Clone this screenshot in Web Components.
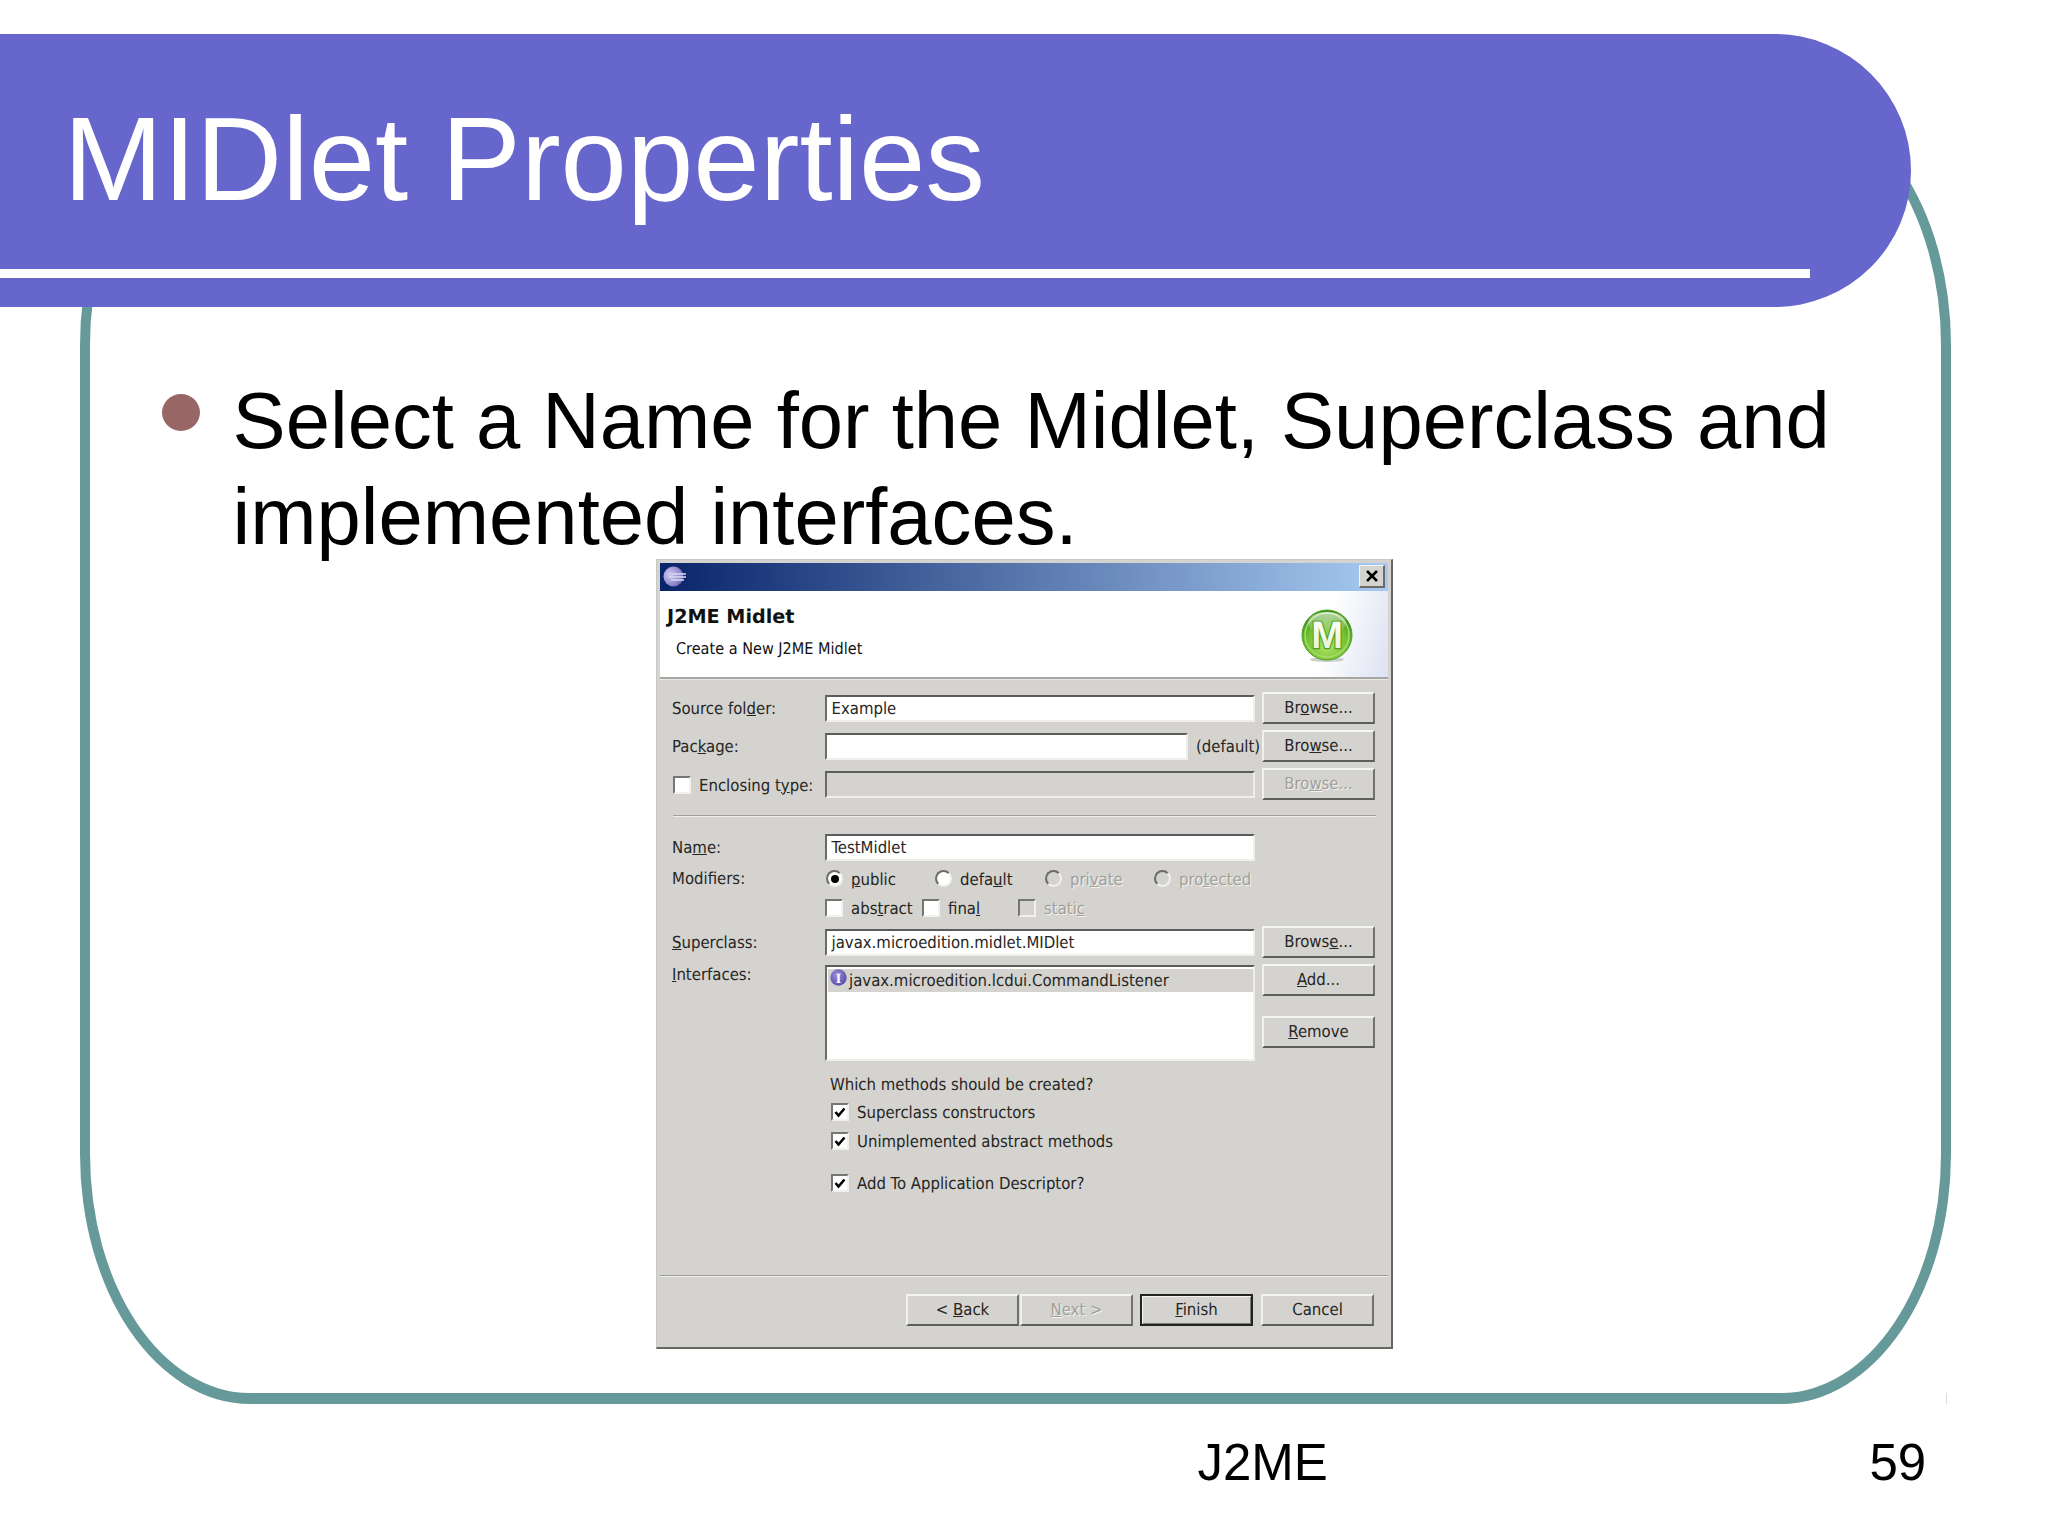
<!DOCTYPE html>
<html lang="en">
<head>
<meta charset="utf-8">
<title>MIDlet Properties</title>
<style>
html, body { margin: 0; background: #fff; }
</style>
</head>
<body>
<slide-page>
  <slide-title slot="title">MIDlet Properties</slide-title>
  <slide-bullet slot="bullet">Select a Name for the Midlet, Superclass and implemented interfaces.</slide-bullet>
  <swt-dialog slot="dialog">
    <span slot="heading">J2ME Midlet</span>
    <span slot="sub">Create a New J2ME Midlet</span>

    <form-row style="height:32px">
      <span slot="label">Source fol<u>d</u>er:</span>
      <swt-field>Example</swt-field>
      <swt-button slot="action">Br<u>o</u>wse...</swt-button>
    </form-row>
    <form-row style="height:32px;margin-top:6px">
      <span slot="label">Pac<u>k</u>age:</span>
      <swt-field style="width:363px"></swt-field>
      <span class="suffix" style="margin-left:8px;white-space:nowrap;position:relative;top:1px">(default)</span>
      <swt-button slot="action">Bro<u>w</u>se...</swt-button>
    </form-row>
    <form-row style="height:32px;margin-top:6px">
      <swt-check slot="label" style="margin-left:1px">Enclosing t<u>y</u>pe:</swt-check>
      <swt-field disabled></swt-field>
      <swt-button slot="action" disabled>Bro<u>w</u>se...</swt-button>
    </form-row>
    <form-sep></form-sep>
    <form-row style="height:26px;margin-top:17px">
      <span slot="label">Na<u>m</u>e:</span>
      <swt-field>TestMidlet</swt-field>
    </form-row>
    <form-row style="height:17px;margin-top:10px">
      <span slot="label">Modifiers:</span>
      <choice-grid cols="109px 110px 109px 1fr">
        <swt-radio checked style="margin-left:1px"><u>p</u>ublic</swt-radio>
        <swt-radio style="margin-left:1px">defa<u>u</u>lt</swt-radio>
        <swt-radio disabled style="margin-left:1px">pri<u>v</u>ate</swt-radio>
        <swt-radio disabled style="margin-left:1px">pro<u>t</u>ected</swt-radio>
      </choice-grid>
    </form-row>
    <form-row style="height:19px;margin-top:11px">
      <choice-grid cols="97px 96px 1fr">
        <swt-check>abs<u>t</u>ract</swt-check>
        <swt-check>fina<u>l</u></swt-check>
        <swt-check disabled>stati<u>c</u></swt-check>
      </choice-grid>
    </form-row>
    <form-row style="height:32px;margin-top:9px">
      <span slot="label"><u>S</u>uperclass:</span>
      <swt-field>javax.microedition.midlet.MIDlet</swt-field>
      <swt-button slot="action">Brows<u>e</u>...</swt-button>
    </form-row>
    <form-row style="height:97px;margin-top:6px;align-items:start">
      <span slot="label"><u>I</u>nterfaces:</span>
      <swt-list>javax.microedition.lcdui.CommandListener</swt-list>
      <swt-button slot="action" style="height:32px"><u>A</u>dd...</swt-button>
      <swt-button slot="action" style="height:32px;margin-top:20px"><u>R</u>emove</swt-button>
    </form-row>

    <method-list>
      <span slot="question">Which methods should be created?</span>
      <swt-check checked style="height:18px;margin-top:8px">Superclass constructors</swt-check>
      <swt-check checked style="height:18px;margin-top:11px">Unimplemented abstract methods</swt-check>
      <swt-check checked style="height:18px;margin-top:24px">Add To Application Descriptor?</swt-check>
    </method-list>

    <swt-button slot="footer" style="width:113px;margin-right:1px">&lt; <u>B</u>ack</swt-button>
    <swt-button slot="footer" style="width:113px;margin-right:7px" disabled><u>N</u>ext &gt;</swt-button>
    <swt-button slot="footer" style="width:113px;margin-right:8px" default><u>F</u>inish</swt-button>
    <swt-button slot="footer" style="width:113px">Cancel</swt-button>
  </swt-dialog>
  <span slot="center">J2ME</span>
  <span slot="number">59</span>
</slide-page>

<script>
const UI_FONT = `"DejaVu Sans Condensed", "Noto Sans", sans-serif`;

function define(name, css, html, extra = {}) {
  const template = document.createElement("template");
  template.innerHTML = `<style>${css}</style>${html}`;
  class Part extends HTMLElement {
    constructor() {
      super();
      this.attachShadow({ mode: "open" });
      this.shadowRoot.appendChild(template.content.cloneNode(true));
      if (extra.init) extra.init(this);
    }
  }
  customElements.define(name, Part);
}

define("slide-page", `
  :host {
    display: grid;
    position: relative;
    width: 2048px;
    height: 1536px;
    overflow: hidden;
    background: #fff;
    font-family: "Liberation Sans", Arial, sans-serif;
    color: #000;
    grid-template-rows: 1404px auto;
  }
  .title { grid-area: 1 / 1; z-index: 1; align-self: start; margin-top: 34px; width: 1911px; }
  .frame {
    grid-area: 1 / 1;
    box-sizing: border-box;
    margin: 95px 97px 0 80px;
    border: 10px solid #669999;
    border-bottom-width: 11px;
    border-radius: 170px / 250px;
    padding-top: 268.3px;
    display: flex;
    flex-direction: column;
    align-items: flex-start;
  }
  .dialog { display: block; margin: -5.1px 0 0 566px; }
  .foot {
    display: grid;
    grid-template-columns: 1197.5px 672px auto;
    padding-top: 29.3px;
    font-size: 51px;
    line-height: 60px;
  }
  .foot .c { grid-column: 2; }
  .foot .n { grid-column: 3; }
  .speck { position: absolute; left: 1946px; top: 1393px; width: 1px; height: 11px; background: #dcdcdc; }
`, `
  <div class="title"><slot name="title"></slot></div>
  <div class="frame">
    <slot name="bullet"></slot>
    <div class="dialog"><slot name="dialog"></slot></div>
  </div>
  <div class="foot">
    <div class="c"><slot name="center"></slot></div>
    <div class="n"><slot name="number"></slot></div>
  </div>
  <div class="speck"></div>
`);

define("slide-title", `
  :host {
    display: block;
    box-sizing: border-box;
    height: 273px;
    background: #6666cc;
    border-radius: 0 136.5px 136.5px 0;
    color: #fff;
    padding-top: 55.4px;
  }
  .t { padding-left: 63.5px; font-size: 119.3px; line-height: 140px; white-space: nowrap; }
  .rule { margin-top: 39.6px; width: 1810px; height: 9px; background: #fff; }
`, `<div class="t"><slot></slot></div><div class="rule"></div>`);

define("slide-bullet", `
  :host {
    display: grid;
    grid-template-columns: 38px 1fr;
    column-gap: 32.6px;
    margin-left: 72px;
    width: 1770px;
    font-size: 79.6px;
    line-height: 95.4px;
  }
  .dot { width: 38px; height: 37px; margin-top: 21px; border-radius: 50%; background: #996666; }
`, `<div class="dot"></div><div><slot></slot></div>`);

define("swt-dialog", `
  :host {
    display: flex;
    flex-direction: column;
    box-sizing: border-box;
    width: 737px;
    height: 790px;
    padding: 3px 3px 0;
    background: #d4d3cf;
    border-top: 1px solid #c8c8c5;
    border-left: 1px solid #c8c8c5;
    border-right: 2px solid #666664;
    border-bottom: 2px solid #666664;
    font-family: ${UI_FONT};
    font-size: 16.6px;
    line-height: 20px;
    color: #262624;
    text-rendering: geometricPrecision;
  }
  .bar {
    flex: none;
    height: 28px;
    display: flex;
    align-items: flex-start;
    justify-content: space-between;
    background: linear-gradient(90deg, #0a246a, #a6caf0);
  }
  .bar svg.logo { margin: 3px 0 0 3px; }
  .close {
    box-sizing: border-box;
    width: 26px;
    height: 23px;
    margin: 2px 3px 0 0;
    background: #d4d3cf;
    border-top: 1px solid #f4f4f1;
    border-left: 1px solid #f4f4f1;
    border-right: 2px solid #6c6c6a;
    border-bottom: 2px solid #6c6c6a;
    display: flex;
    align-items: center;
    justify-content: center;
  }
  .banner {
    flex: none;
    box-sizing: border-box;
    height: 86px;
    display: flex;
    justify-content: space-between;
    background:
      linear-gradient(105deg, rgba(222,226,242,0) 90%, #dde2f2 100%),
      #fff;
    color: #111;
  }
  .head { padding-left: 7px; }
  .h1 { font-family: "DejaVu Sans", sans-serif; font-weight: bold; font-size: 19.2px; line-height: 24px; padding-top: 13.5px; }
  .h2 { padding: 10px 0 0 9px; line-height: 20px; font-size: 16.1px; }
  .banner svg { margin: 18px 34px 0 0; }
  .rule { flex: none; height: 2px; background: #a5a5a2; border-bottom: 1px solid #e9e8e4; }
  .form { flex: 1; padding: 12px 0 0 12px; }
  .foot {
    flex: none;
    height: 72px;
    box-sizing: border-box;
    border-top: 1px solid #9d9d9a;
    box-shadow: inset 0 1px 0 #efeeea;
    padding: 18px 14px 0 0;
    display: flex;
    justify-content: flex-end;
  }
  ::slotted(swt-button) { height: 32px; }
`, `
  <div class="bar">
    <svg class="logo" width="24" height="21" viewBox="0 0 24 21">
      <defs><radialGradient id="s" cx=".3" cy=".4" r=".9"><stop offset="0" stop-color="#cfcaf0"/><stop offset=".6" stop-color="#8d86cc"/><stop offset="1" stop-color="#3f3a8c"/></radialGradient></defs>
      <circle cx="10.5" cy="10.5" r="10" fill="url(#s)"/>
      <path d="M8 8h15M6 11h17M8 14h13" stroke="#dcd9f2" stroke-width="1.5" fill="none"/>
    </svg>
    <div class="close">
      <svg width="12" height="12" viewBox="0 0 12 12"><path d="M1 1l10 10M11 1L1 11" stroke="#000" stroke-width="2.6" fill="none"/></svg>
    </div>
  </div>
  <div class="banner">
    <div class="head">
      <div class="h1"><slot name="heading"></slot></div>
      <div class="h2"><slot name="sub"></slot></div>
    </div>
    <svg width="54" height="54" viewBox="0 0 54 54">
      <defs>
        <radialGradient id="g" cx=".5" cy=".7" r=".62"><stop offset="0" stop-color="#b4e464"/><stop offset=".72" stop-color="#6cbd30"/><stop offset="1" stop-color="#3f931d"/></radialGradient>
        <linearGradient id="m" x1="0" y1="0" x2="0" y2="1"><stop offset="0" stop-color="#fff"/><stop offset="1" stop-color="#dff2cd"/></linearGradient>
        <linearGradient id="h" x1="0" y1="0" x2="0" y2="1"><stop offset="0" stop-color="#fff" stop-opacity=".65"/><stop offset="1" stop-color="#fff" stop-opacity="0"/></linearGradient>
      </defs>
      <ellipse cx="27" cy="50.5" rx="17" ry="2.5" fill="#c9cfc6"/>
      <circle cx="27" cy="26" r="25" fill="url(#g)" stroke="#4f9f26" stroke-width="1"/>
      <circle cx="27" cy="26" r="22" fill="none" stroke="#a7dc6b" stroke-width="1.5"/>
      <ellipse cx="27" cy="14" rx="19" ry="11" fill="url(#h)"/>
      <text x="27" y="39" text-anchor="middle" font-family="Liberation Sans, sans-serif" font-weight="bold" font-size="38" fill="url(#m)" stroke="#529f29" stroke-width="2.4" paint-order="stroke">M</text>
    </svg>
  </div>
  <div class="rule"></div>
  <div class="form"><slot></slot></div>
  <div class="foot"><slot name="footer"></slot></div>
`);

define("form-row", `
  :host {
    display: grid;
    grid-template-columns: 153px 437px 113px;
    grid-template-rows: minmax(0, 1fr);
    align-items: center;
  }
  .label { display: flex; align-items: center; box-sizing: border-box; padding-top: 1px; }
  .main { display: flex; align-items: center; height: 100%; }
  .act { display: flex; flex-direction: column; height: 100%; }
  ::slotted(swt-field) { flex: none; }
  ::slotted(swt-button) { height: 100%; }
`, `
  <div class="label"><slot name="label"></slot></div>
  <div class="main"><slot></slot></div>
  <div class="act"><slot name="action"></slot></div>
`, {
  init(el) {
    el.shadowRoot.querySelector(".main").style.gridColumn = "2";
    if (!el.querySelector('[slot="label"]')) el.shadowRoot.querySelector(".label").style.display = "block";
  }
});

define("form-sep", `
  :host {
    display: block;
    box-sizing: border-box;
    margin: 15px 0 0 1px;
    width: 703px;
    height: 2px;
    background: #9f9f9c;
    border-bottom: 1px solid #efeeea;
  }
`, ``);

define("swt-field", `
  :host {
    display: flex;
    align-items: center;
    box-sizing: border-box;
    width: 430px;
    height: 27px;
    padding-left: 4.5px;
    background: #fff;
    border-top: 2px solid #5c5c5a;
    border-left: 2px solid #6a6a68;
    border-right: 2px solid #efeeea;
    border-bottom: 2px solid #efeeea;
    color: #262624;
    white-space: nowrap;
  }
  :host([disabled]) { background: #d4d3cf; }
  span { padding-top: 2px; }
`, `<span><slot></slot></span>`);

define("swt-list", `
  :host {
    display: block;
    box-sizing: border-box;
    width: 430px;
    height: 96px;
    margin-top: 1px;
    background: #fff;
    border-top: 2px solid #5c5c5a;
    border-left: 2px solid #6a6a68;
    border-right: 2px solid #efeeea;
    border-bottom: 2px solid #efeeea;
    padding-top: 2px;
    color: #262624;
  }
  .item {
    display: flex;
    align-items: flex-start;
    height: 23px;
    margin-left: 1px;
    background: #d4d3cf;
    white-space: nowrap;
  }
  svg { flex: none; margin: 0 2px 0 2px; }
  span { padding-top: 2px; }
`, `
  <div class="item">
    <svg width="17" height="17" viewBox="0 0 17 17">
      <defs><radialGradient id="i" cx=".4" cy=".35" r=".8"><stop offset="0" stop-color="#9a8fde"/><stop offset="1" stop-color="#4c3f9e"/></radialGradient></defs>
      <circle cx="8.5" cy="8.5" r="8.2" fill="url(#i)"/>
      <text x="8.5" y="13.5" text-anchor="middle" font-family="Liberation Serif, serif" font-weight="bold" font-size="14" fill="#fff">I</text>
    </svg>
    <span><slot></slot></span>
  </div>
`);

define("swt-button", `
  :host {
    display: flex;
    align-items: center;
    justify-content: center;
    box-sizing: border-box;
    width: 113px;
    background: #d4d3cf;
    border-top: 2px solid #f4f4f1;
    border-left: 2px solid #f0f0ed;
    border-right: 2px solid #71716e;
    border-bottom: 2px solid #5e5e5c;
    color: #262624;
    white-space: nowrap;
  }
  :host([disabled]) { color: #a19f9c; text-shadow: 1px 1px 0 #f4f4f1; }
  :host([default]) {
    border: 2px solid #232322;
    box-shadow: inset 1px 1px 0 #f4f4f1, inset -1px -1px 0 #7a7a78;
  }
`, `<span><slot></slot></span>`);

const box = `
  :host {
    display: flex;
    align-items: center;
    gap: 8px;
    white-space: nowrap;
    height: 100%;
  }
  :host([disabled]) { color: #a19f9c; text-shadow: 1px 1px 0 #f4f4f1; }
  .b { flex: none; box-sizing: border-box; background: #fff; }
  :host([disabled]) .b { background: #d4d3cf; }
  span { padding-top: 2px; }
`;

define("swt-check", box + `
  .b {
    width: 18px;
    height: 18px;
    display: flex;
    align-items: center;
    justify-content: center;
    border-top: 2px solid #757573;
    border-left: 2px solid #757573;
    border-right: 2px solid #f1f0ec;
    border-bottom: 2px solid #f1f0ec;
  }
  svg { display: none; }
  :host([checked]) svg { display: block; }
`, `
  <div class="b"><svg width="12" height="11" viewBox="0 0 12 11"><path d="M1.5 5l3 3.5L10.5 1.5" stroke="#000" stroke-width="2.6" fill="none"/></svg></div>
  <span><slot></slot></span>
`);

define("swt-radio", box + `
  .b {
    width: 17px;
    height: 17px;
    border-radius: 50%;
    border: 2px solid;
    border-color: #6c6c6a #f1f0ec #f1f0ec #6c6c6a;
    display: flex;
    align-items: center;
    justify-content: center;
  }
  i { display: none; width: 8px; height: 8px; border-radius: 50%; background: #000; }
  :host([checked]) i { display: block; }
`, `<div class="b"><i></i></div><span><slot></slot></span>`);

define("choice-grid", `
  :host { display: grid; grid-template-rows: minmax(0, 1fr); align-items: center; width: 430px; height: 100%; }
`, `<slot></slot>`, {
  init(el) { el.style.gridTemplateColumns = el.getAttribute("cols"); }
});

define("method-list", `
  :host { display: block; padding: 14px 0 0 159px; }
  .q { margin-left: -1px; }
`, `<div class="q"><slot name="question"></slot></div><slot></slot>`);
</script>
</body>
</html>
